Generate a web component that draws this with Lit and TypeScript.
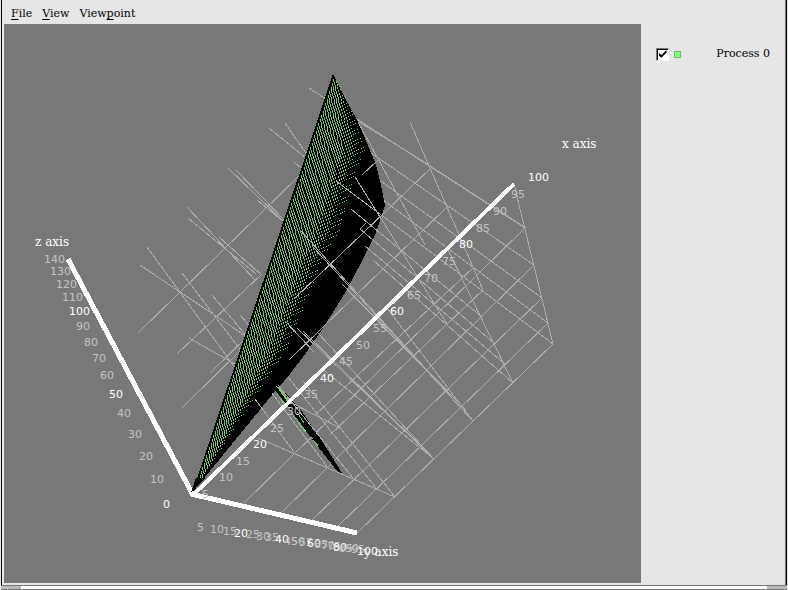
import { LitElement, html, svg, css } from "lit";
import { customElement, state } from "lit/decorators.js";

type Seg = [number, number, number, number];
type Tick = [string, number, number];

// Mesh lines that lie behind the plotted surface.
const BACK: Seg[] = [
  [241, 506, 525, 228], [279, 515, 534, 265], [310, 522, 542, 298],
  [336, 528, 548, 323], [357, 533, 553, 344],
  [514, 184, 553, 344], [447, 248, 513, 383], [387, 308, 473, 421],
  [322, 369, 434, 459], [258, 438, 395, 497],
  [309, 88, 525, 228], [371, 153, 534, 265], [378, 179, 542, 298],
  [383, 200, 548, 323], [410, 122, 483, 290], [359, 122, 410, 153], [410, 153, 526, 228],
  [269, 128, 306, 158], [285, 123, 308, 156], [294, 162, 302, 169],
  [228, 168, 284, 222], [236, 170, 286, 222], [257, 200, 284, 222],
  [187, 207, 256, 281], [188, 218, 256, 274], [219, 237, 258, 272], [247, 262, 262, 275],
  [147, 247, 236, 369], [140, 265, 250, 339], [182, 273, 242, 352],
  [212, 295, 248, 338], [240, 315, 252, 329], [189, 338, 240, 367],
  [138, 333, 300, 175], [177, 354, 262, 274], [210, 373, 250, 334], [182, 408, 246, 345],
  [300, 392, 460, 237], [315, 415, 473, 268], [330, 435, 483, 290],
];

// Mesh lines that are nearer to the viewer than the surface.
const FRONT: Seg[] = [
  [358, 122, 425, 245], [355, 177, 447, 324], [336, 181, 553, 344],
  [351, 209, 482, 317], [360, 229, 494, 343], [365, 246, 505, 364], [373, 260, 513, 383],
  [300, 230, 473, 421], [313, 247, 473, 421], [342, 284, 466, 410], [347, 290, 458, 402],
  [295, 298, 431, 168], [289, 360, 447, 207], [362, 175, 378, 160], [360, 229, 366, 223],
  [286, 322, 314, 352], [297, 328, 434, 459], [303, 331, 430, 455], [318, 333, 434, 459],
  [255, 399, 294, 452], [272, 393, 328, 468], [278, 385, 353, 478],
  [288, 377, 376, 488], [303, 381, 395, 497], [292, 403, 340, 428],
];

const Z_TICKS: Tick[] = [
  ["140", 44, 263], ["130", 50, 275], ["120", 56, 288], ["110", 62, 301], ["100", 69, 315],
  ["90", 76, 330], ["80", 84, 346], ["70", 92, 362], ["60", 100, 379], ["50", 109, 398],
  ["40", 117, 417], ["30", 128, 438], ["20", 139, 460], ["10", 150, 483], ["0", 163, 508],
];
const X_TICKS: Tick[] = [
  ["5", 202, 498], ["10", 219, 481], ["15", 236, 465], ["20", 253, 448], ["25", 270, 432],
  ["30", 287, 415], ["35", 304, 398], ["40", 320, 382], ["45", 339, 365], ["50", 356, 349],
  ["55", 373, 332], ["60", 390, 315], ["65", 407, 299], ["70", 424, 282], ["75", 442, 265],
  ["80", 459, 248], ["85", 476, 232], ["90", 493, 215], ["95", 511, 198], ["100", 528, 181],
];
const Y_TICKS: Tick[] = [
  ["5", 197, 531], ["10", 210, 533], ["15", 223, 535], ["20", 234, 537], ["25", 246, 538],
  ["30", 256, 540], ["35", 265, 541], ["40", 275, 543], ["45", 284, 545], ["50", 291, 545],
  ["55", 299, 546], ["60", 307, 547], ["65", 314, 548], ["70", 321, 549], ["75", 327, 550],
  ["80", 333, 551], ["85", 339, 552], ["90", 345, 552], ["95", 351, 553], ["100", 357, 555],
];

const toPath = (segs: Seg[]) => segs.map(([a, b, c, d]) => `M${a} ${b}L${c} ${d}`).join("");

const leftEdge = (y: number) => 192 + ((492 - y) * 141) / 418;

// Right limit of the lit part of the surface, as [y, x].
const LIT: [number, number][] = [
  [78, 336], [100, 347], [130, 359], [150, 364], [170, 356], [200, 347], [230, 339],
  [260, 322], [300, 306], [350, 286], [400, 252], [450, 220], [488, 195],
];
const litEdge = (y: number) => {
  for (let i = 1; i < LIT.length; i++) {
    const [y0, x0] = LIT[i - 1];
    const [y1, x1] = LIT[i];
    if (y <= y1) return x0 + ((x1 - x0) * (y - y0)) / (y1 - y0);
  }
  return 0;
};

// Short strokes along slightly fanned curves; they thin out to the right.
const facets = () => {
  let d = "";
  for (let k = 0; k < 45; k++) {
    for (let y = 79 + ((k * 3) % 4); y < 488; y += 4) {
      const left = leftEdge(y) + 2;
      const spread = y < 200 ? 1.7 + (y - 79) / 400 : 2 - (y - 200) / 900;
      const x = Math.round(left + k * spread);
      const reach = (x - left) / Math.max(1, litEdge(y) - left);
      if (reach > 1) continue;
      const len = reach < 0.6 ? 3 : reach < 0.8 ? 2 : 1;
      if (reach > 0.85 && (k + y) % 3 === 0) continue;
      d += `M${x} ${y}h1v${len}h-1z`;
    }
  }
  return d;
};
const FACETS = facets();

@customElement("app-root")
export class AppRoot extends LitElement {
  @state() private shown = true;

  static styles = css`
    :host {
      display: flex;
      flex-direction: column;
      box-sizing: border-box;
      min-height: 100vh;
      background: #e6e6e6;
      color: #000;
      font-family: "DejaVu Serif", serif;
      font-size: 11px;
      line-height: 14px;
    }
    .window {
      flex: 1;
      display: grid;
      grid-template-columns: minmax(0, 1fr) 145px;
      grid-template-rows: 24px minmax(0, 1fr);
      border-left: 1px solid #000;
      border-right: 1px solid #000;
      margin: 0 1px;
      box-shadow: inset -1px 0 #777, inset 2px 0 #ece6e6;
      padding: 0 0 2px 2px;
    }
    .menu {
      grid-column: 1 / -1;
      display: flex;
      align-items: center;
      gap: 10px;
      padding: 4px 7px 0;
    }
    .item {
      border: 0;
      padding: 0;
      background: none;
      color: inherit;
      font: inherit;
    }
    .key {
      text-decoration: underline;
      text-underline-offset: 2px;
    }
    .view {
      background: #787878;
      display: flex;
      min-height: 0;
    }
    .plot {
      flex: 1;
      min-width: 0;
      width: 100%;
      height: auto;
    }
    .mesh {
      stroke: #acacac;
      fill: none;
      shape-rendering: crispEdges;
    }
    .solid {
      fill: #000;
      shape-rendering: crispEdges;
    }
    .lit {
      fill: #7cc17c;
      shape-rendering: crispEdges;
    }
    .axis {
      stroke: #fff;
      stroke-width: 5px;
      shape-rendering: crispEdges;
    }
    .slim {
      stroke-width: 4px;
    }
    .minor, .major {
      font-family: "DejaVu Sans", sans-serif;
      font-size: 11px;
      fill: #c4c4c4;
    }
    .major, .name {
      fill: #fff;
    }
    .name {
      font-size: 12px;
    }
    .legend {
      padding: 23px 16px 0 15px;
    }
    .entry {
      display: flex;
      align-items: center;
    }
    .tick {
      appearance: none;
      box-sizing: border-box;
      width: 13px;
      height: 13px;
      margin: 0 5px 0 0;
      background: #fff;
      border: 1px solid #fff;
      border-top-color: #777;
      border-left-color: #777;
      box-shadow: inset 1px 1px #000;
      display: grid;
      place-items: center;
    }
    .tick:checked::before {
      content: "";
      width: 8px;
      height: 8px;
      background: #000;
      clip-path: polygon(0 30%, 35% 62%, 100% 0, 100% 34%, 35% 98%, 0 62%);
    }
    .swatch {
      box-sizing: border-box;
      width: 7px;
      height: 7px;
      background: #80ff80;
      border: 1px solid #6cb86c;
    }
    .label {
      margin-left: auto;
    }
    .edge {
      display: grid;
      grid-template-columns: 20px 1fr 20px;
      height: 5px;
      box-sizing: border-box;
      margin: 0 1px;
      border: solid #777;
      border-width: 1px 0;
      background: #fff;
    }
    .grip {
      background: #bbb;
    }
  `;

  private ticks(list: Tick[], step: number) {
    return list.map(
      ([t, x, y]) =>
        svg`<text class=${Number(t) % step === 0 ? "major" : "minor"} x=${x} y=${y}>${t}</text>`
    );
  }

  private surface() {
    return svg`
      <path class="solid" d="M192 493L333 74L345 98L357 120L367 143L376 165L381 185L385 205L381 218L375 235L362 261L345 293L325 325L306 353L290 374L272 395Z"/>
      <path class="lit" d=${FACETS}/>
      <path class="solid" d="M274 389L279 386L301 410L322 441L342 473L338 472L312 439L290 409Z"/>
      <path class="lit" d="M276 386L280 388L292 404L289 404ZM275 391L288 407L286 408ZM296 410L304 422L303 423ZM291 413L306 431L305 433ZM309 434L318 445L317 446Z"/>`;
  }

  render() {
    return html`
      <main class="window">
        <nav class="menu">
          <button class="item"><span class="key">F</span>ile</button>
          <button class="item"><span class="key">V</span>iew</button>
          <button class="item">View<span class="key">p</span>oint</button>
        </nav>
        <section class="view">
          <svg class="plot" viewBox="4 24 637 559" role="img" aria-label="Surface plot">
            <path class="mesh" d=${toPath(BACK)} />
            ${this.shown ? this.surface() : null}
            <path class="mesh" d=${toPath(FRONT)} />
            <path class="axis" d="M68 259L193 495" />
            <path class="axis" d="M191 494L357 533" />
            <path class="axis slim" d="M193 495L514 184" />
            <path class="solid" d="M191 493L196 478L205 478Z" />
            ${this.ticks(Z_TICKS, 50)} ${this.ticks(X_TICKS, 20)} ${this.ticks(Y_TICKS, 20)}
            <text class="name" x="35" y="246">z axis</text>
            <text class="name" x="562" y="148">x axis</text>
            <text class="name" x="364" y="556">y axis</text>
          </svg>
        </section>
        <aside class="legend">
          <label class="entry">
            <input
              class="tick"
              type="checkbox"
              .checked=${this.shown}
              @change=${(e: Event) => (this.shown = (e.target as HTMLInputElement).checked)}
            />
            <span class="swatch"></span>
            <span class="label">Process 0</span>
          </label>
        </aside>
      </main>
      <footer class="edge"><span class="grip"></span><span></span><span class="grip"></span></footer>
    `;
  }
}
